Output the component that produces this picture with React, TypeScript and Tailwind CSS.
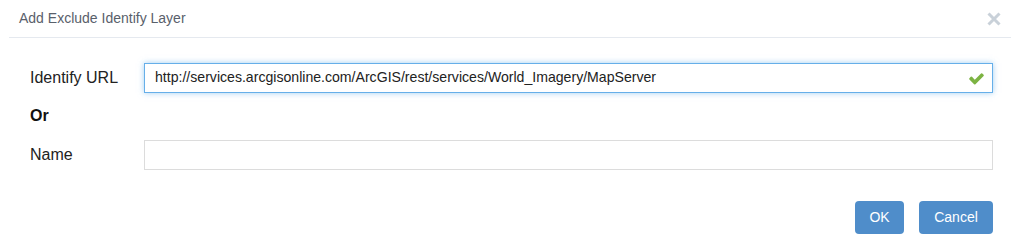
import React from 'react';

const CheckIcon: React.FC = () => (
  <svg viewBox="0 0 1792 1792" className="w-[17px] h-[17px]" fill="#7cb342">
    <path d="M1671 566q0 40-28 68l-724 724-136 136q-28 28-68 28t-68-28l-136-136-362-362q-28-28-28-68t28-68l136-136q28-28 68-28t68 28l294 295 656-657q28-28 68-28t68 28l136 136q28 28 28 68z" />
  </svg>
);

const CloseIcon: React.FC = () => (
  <svg viewBox="0 0 14 14" className="w-[14px] h-[14px]" stroke="#c9d1d9" strokeWidth="3">
    <path d="M1.5 1.5 L12.5 12.5 M12.5 1.5 L1.5 12.5" />
  </svg>
);

const App: React.FC = () => {
  return (
    <div className="w-[1020px] h-[246px] bg-white font-['Liberation_Sans',Arial,sans-serif] overflow-hidden">
      <div className="mx-[9px]">
        <div className="h-[38px] flex items-center justify-between border-b border-[#e5e9ef] pl-[10px] pr-[10px]">
          <span className="text-[14px] text-[#59606b] -mt-[1px]">Add Exclude Identify Layer</span>
          <CloseIcon />
        </div>

        <div className="pl-[21px] pr-[18px] pt-[25px]">
          <div className="flex items-center">
            <label className="w-[114px] text-[16px] text-[#222]">Identify URL</label>
            <div className="flex-1 h-[30px] flex items-center justify-between border border-[#66afe9] shadow-[0_0_6px_rgba(102,175,233,0.6)] pl-[10px] pr-[7px]">
              <span className="text-[14.1px] text-[#222]">http://services.arcgisonline.com/ArcGIS/rest/services/World_Imagery/MapServer</span>
              <CheckIcon />
            </div>
          </div>

          <div className="mt-[14px] h-[18px] flex items-center text-[16px] font-bold text-[#111]">Or</div>

          <div className="mt-[15px] flex items-center">
            <label className="w-[114px] text-[16px] text-[#222]">Name</label>
            <div className="flex-1 h-[30px] border border-[#dcdcdc]" />
          </div>

          <div className="mt-[31px] flex justify-end gap-[15px]">
            <button className="w-[49px] h-[33px] rounded-[4px] bg-[#4f8dca] text-white text-[14px]">OK</button>
            <button className="w-[74px] h-[33px] rounded-[4px] bg-[#4f8dca] text-white text-[14px]">Cancel</button>
          </div>
        </div>
      </div>
    </div>
  );
};

export default App;
